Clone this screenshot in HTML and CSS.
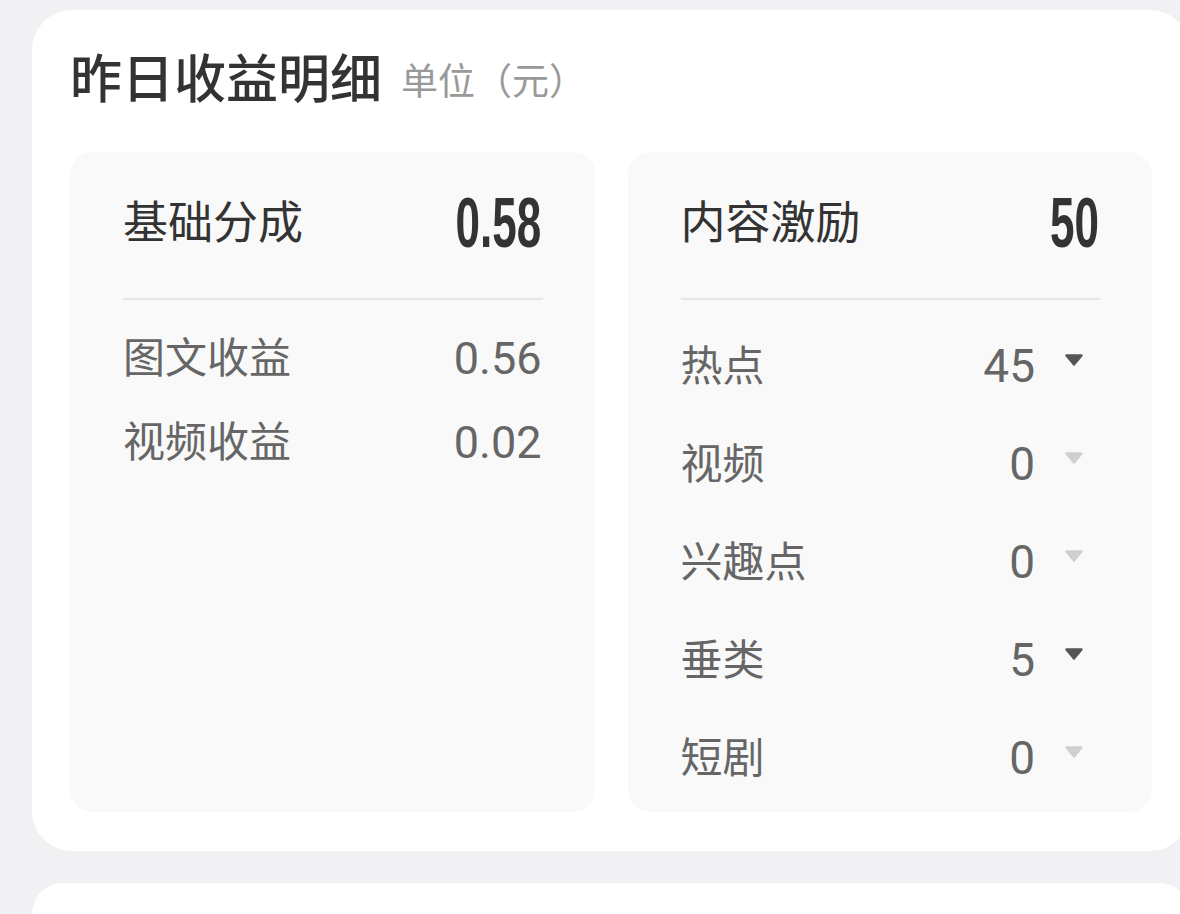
FILE: index.html
```html
<!DOCTYPE html>
<html lang="zh-CN">

<head>
    <meta charset="UTF-8">
    <meta name="viewport" content="width=device-width, initial-scale=1.0">
    <title>昨日收益明细</title>
    <link rel="stylesheet" href="styles.css">
</head>

<body>
    <div class="page">
        <section class="card">
            <h2 class="card-title">
                <span class="title-main">昨日收益明细</span>
                <span class="title-unit">单位（元）</span>
            </h2>

            <div class="panels">
                <!-- 基础分成 -->
                <div class="panel">
                    <div class="panel-head">
                        <span class="head-label">基础分成</span>
                        <span class="head-num">0.58</span>
                    </div>
                    <ul class="rows rows-base">
                        <li class="row">
                            <span class="row-label">图文收益</span>
                            <span class="row-value">0.56</span>
                        </li>
                        <li class="row">
                            <span class="row-label">视频收益</span>
                            <span class="row-value">0.02</span>
                        </li>
                    </ul>
                </div>

                <!-- 内容激励 -->
                <div class="panel">
                    <div class="panel-head">
                        <span class="head-label">内容激励</span>
                        <span class="head-num">50</span>
                    </div>
                    <ul class="rows rows-bonus">
                        <li class="row">
                            <span class="row-label">热点</span>
                            <span class="row-value">45</span>
                            <span class="arrow">
                                <svg width="18" height="12" viewBox="0 0 18 12"><path d="M1.5 1.5h15L9 10.5z" stroke-linejoin="round" stroke-width="2.4"/></svg>
                            </span>
                        </li>
                        <li class="row">
                            <span class="row-label">视频</span>
                            <span class="row-value">0</span>
                            <span class="arrow is-off">
                                <svg width="18" height="12" viewBox="0 0 18 12"><path d="M1.5 1.5h15L9 10.5z" stroke-linejoin="round" stroke-width="2.4"/></svg>
                            </span>
                        </li>
                        <li class="row">
                            <span class="row-label">兴趣点</span>
                            <span class="row-value">0</span>
                            <span class="arrow is-off">
                                <svg width="18" height="12" viewBox="0 0 18 12"><path d="M1.5 1.5h15L9 10.5z" stroke-linejoin="round" stroke-width="2.4"/></svg>
                            </span>
                        </li>
                        <li class="row">
                            <span class="row-label">垂类</span>
                            <span class="row-value">5</span>
                            <span class="arrow">
                                <svg width="18" height="12" viewBox="0 0 18 12"><path d="M1.5 1.5h15L9 10.5z" stroke-linejoin="round" stroke-width="2.4"/></svg>
                            </span>
                        </li>
                        <li class="row">
                            <span class="row-label">短剧</span>
                            <span class="row-value">0</span>
                            <span class="arrow is-off">
                                <svg width="18" height="12" viewBox="0 0 18 12"><path d="M1.5 1.5h15L9 10.5z" stroke-linejoin="round" stroke-width="2.4"/></svg>
                            </span>
                        </li>
                    </ul>
                </div>
            </div>
        </section>

        <section class="card card-next"></section>
    </div>
</body>

</html>
```
FILE: styles.css
```css
* {
    box-sizing: border-box;
}

html,
body {
    margin: 0;
    width: 1180px;
    height: 914px;
    overflow: hidden;
    background: #f1f1f4;
}

body {
    font-family: "Noto Sans CJK SC", "Noto Sans", sans-serif;
    color: #333;
}

.page {
    padding: 10px 0 0 32px;
    display: flex;
    flex-direction: column;
    gap: 32px;
}

.card {
    width: 1158px;
    background: #fff;
    border-radius: 40px;
    padding: 36px 38px 39px;
}

.card-next {
    height: 31px;
    padding: 0;
    border-radius: 40px 40px 0 0;
}

.card-title {
    margin: 0;
    height: 60px;
    display: flex;
    align-items: center;
    gap: 19px;
    font-weight: normal;
}

.title-main {
    font-size: 52px;
    font-weight: 500;
    color: #333;
    line-height: 60px;
}

.title-unit {
    font-size: 37px;
    color: #999;
    line-height: 60px;
    padding-top: 6px;
}

.panels {
    margin-top: 46px;
    display: grid;
    grid-template-columns: 1fr 1fr;
    gap: 33px;
}

.panel {
    background: #f9f9f9;
    border-radius: 22px;
    padding: 0 52px 5px 53px;
}

.panel-head {
    height: 148px;
    padding-top: 40px;
    border-bottom: 2px solid #e6e6e6;
    display: flex;
    justify-content: space-between;
    align-items: flex-start;
}

.head-label {
    font-size: 45px;
    line-height: 60px;
    color: #333;
    margin-top: -2px;
}

.head-num {
    font-family: "Liberation Sans", Arial, sans-serif;
    font-weight: bold;
    font-size: 71px;
    line-height: 60px;
    color: #333;
    transform: scaleX(0.62);
    transform-origin: right center;
    margin-top: 1px;
    margin-right: 1px;
}

.rows {
    list-style: none;
    margin: 0;
    padding: 16px 0 0;
}

.rows-bonus {
    padding-top: 17px;
}

.row {
    display: flex;
    align-items: center;
    height: 84px;
}

.rows-bonus .row {
    height: 98px;
}

.row-label {
    flex: 1;
    font-size: 42px;
    color: #666;
    margin-bottom: 8px;
}

.row-value {
    font-family: Roboto, "Liberation Sans", sans-serif;
    font-size: 46px;
    color: #666;
}

.rows-base .row-value {
    font-size: 45px;
    margin-right: 1px;
}

.arrow {
    width: 65px;
    padding-left: 30px;
    display: flex;
    margin-top: -12px;
}

.arrow svg {
    fill: #555;
    stroke: #555;
}

.arrow.is-off svg {
    fill: #cfcfcf;
    stroke: #cfcfcf;
}
```
